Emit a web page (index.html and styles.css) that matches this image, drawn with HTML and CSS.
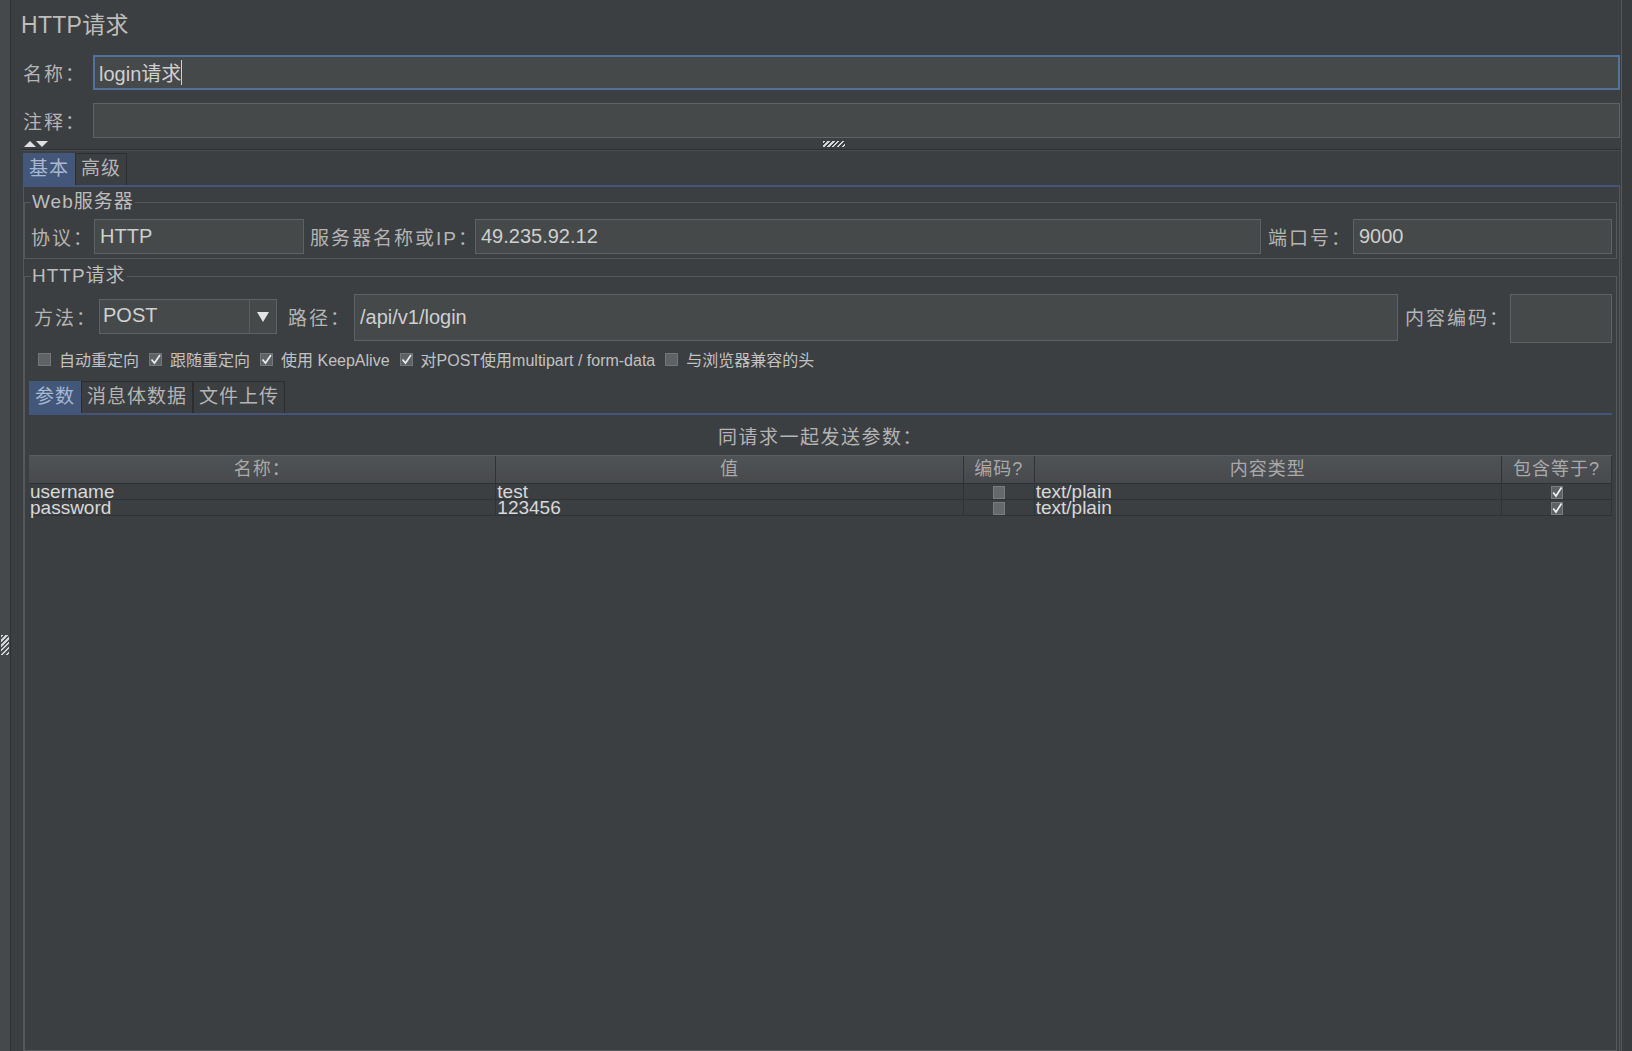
FILE: index.html
```html
<!DOCTYPE html>
<html lang="zh-CN">
<head>
<meta charset="utf-8">
<title>HTTP请求</title>
<link rel="stylesheet" href="styles.css">
</head>
<body>
<div class="app">
  <div class="split-strip"><div class="grip"></div></div>
  <div class="main">
    <div class="title">HTTP请求</div>
    <div class="field-row name-row">
      <span class="lbl">名称：</span>
      <div class="input focus">login请求<span class="caret"></span></div>
    </div>
    <div class="field-row comment-row">
      <span class="lbl">注释：</span>
      <div class="input"></div>
    </div>
    <div class="collapse-bar">
      <svg class="arrows" width="26" height="8" viewBox="0 0 26 8"><path d="M1 7 L7 1 L13 7 Z" fill="#e0e0e0"/><path d="M13 1 L25 1 L19 7 Z" fill="#e0e0e0"/></svg>
      <div class="hgrip"></div>
      <div></div>
    </div>
    <div class="tabs">
      <div class="tab active">基本</div>
      <div class="tab">高级</div>
    </div>
    <div class="tab-panel">
      <fieldset class="group web">
        <legend>Web服务器</legend>
        <div class="web-row">
          <span class="lbl w-proto">协议：</span>
          <div class="input w-proto-in">HTTP</div>
          <span class="lbl w-host">服务器名称或IP：</span>
          <div class="input w-host-in">49.235.92.12</div>
          <span class="lbl w-port">端口号：</span>
          <div class="input w-port-in">9000</div>
        </div>
      </fieldset>
      <fieldset class="group http">
        <legend>HTTP请求</legend>
        <div class="method-row">
          <span class="lbl m-lbl">方法：</span>
          <div class="combo">
            <div class="combo-text">POST</div>
            <div class="combo-btn"><svg width="12" height="10" viewBox="0 0 12 10"><path d="M0 0 L12 0 L6 10 Z" fill="#e4e4e4"/></svg></div>
          </div>
          <span class="lbl p-lbl">路径：</span>
          <div class="input path-in">/api/v1/login</div>
          <span class="lbl e-lbl">内容编码：</span>
          <div class="input enc-in"></div>
        </div>
        <div class="checks">
          <div class="cb"><svg class="box" viewBox="0 0 13 13"><rect x="0.5" y="0.5" width="12" height="12" fill="#5f6264" stroke="#74777a"/></svg><span>自动重定向</span></div>
          <div class="cb"><svg class="box" viewBox="0 0 13 13"><rect x="0.5" y="0.5" width="12" height="12" fill="#5f6264" stroke="#74777a"/><path d="M2.5 6.5 L5.5 10 L11 2" fill="none" stroke="#ececec" stroke-width="1.7"/></svg><span>跟随重定向</span></div>
          <div class="cb"><svg class="box" viewBox="0 0 13 13"><rect x="0.5" y="0.5" width="12" height="12" fill="#5f6264" stroke="#74777a"/><path d="M2.5 6.5 L5.5 10 L11 2" fill="none" stroke="#ececec" stroke-width="1.7"/></svg><span>使用 KeepAlive</span></div>
          <div class="cb"><svg class="box" viewBox="0 0 13 13"><rect x="0.5" y="0.5" width="12" height="12" fill="#5f6264" stroke="#74777a"/><path d="M2.5 6.5 L5.5 10 L11 2" fill="none" stroke="#ececec" stroke-width="1.7"/></svg><span>对POST使用multipart / form-data</span></div>
          <div class="cb"><svg class="box" viewBox="0 0 13 13"><rect x="0.5" y="0.5" width="12" height="12" fill="#5f6264" stroke="#74777a"/></svg><span>与浏览器兼容的头</span></div>
        </div>
        <div class="tabs inner-tabs">
          <div class="tab active">参数</div>
          <div class="tab">消息体数据</div>
          <div class="tab">文件上传</div>
        </div>
        <div class="inner-panel">
          <div class="caption">同请求一起发送参数：</div>
          <div class="grid head">
            <div class="hc">名称：</div>
            <div class="hc">值</div>
            <div class="hc">编码?</div>
            <div class="hc">内容类型</div>
            <div class="hc">包含等于?</div>
          </div>
          <div class="grid row">
            <div class="c">username</div>
            <div class="c">test</div>
            <div class="c mid"><svg class="tbox" viewBox="0 0 12 13"><rect x="0.5" y="0.5" width="11" height="12" fill="#66696b" stroke="#7a7d80"/></svg></div>
            <div class="c">text/plain</div>
            <div class="c mid"><svg class="tbox" viewBox="0 0 12 13"><rect x="0.5" y="0.5" width="11" height="12" fill="#5f6264" stroke="#7a7d80"/><path d="M2.2 6.5 L5 10 L10.5 1.5" fill="none" stroke="#f0f0f0" stroke-width="1.7"/></svg></div>
          </div>
          <div class="grid row">
            <div class="c">password</div>
            <div class="c">123456</div>
            <div class="c mid"><svg class="tbox" viewBox="0 0 12 13"><rect x="0.5" y="0.5" width="11" height="12" fill="#66696b" stroke="#7a7d80"/></svg></div>
            <div class="c">text/plain</div>
            <div class="c mid"><svg class="tbox" viewBox="0 0 12 13"><rect x="0.5" y="0.5" width="11" height="12" fill="#5f6264" stroke="#7a7d80"/><path d="M2.2 6.5 L5 10 L10.5 1.5" fill="none" stroke="#f0f0f0" stroke-width="1.7"/></svg></div>
          </div>
        </div>
      </fieldset>
    </div>
  </div>
  <div class="right-strip"></div>
</div>
</body>
</html>
```

FILE: styles.css
```css
* { box-sizing: border-box; }
html, body { margin: 0; height: 100%; overflow: hidden; }
body {
  background: #3c3f41;
  color: #bbbbbb;
  font-family: "Liberation Sans", "Noto Sans CJK SC", sans-serif;
}
.app { display: flex; height: 1051px; }

.split-strip {
  width: 11px;
  background: #46494b;
  border-right: 1px solid #2d2f31;
  padding-top: 635px;
}
.grip {
  width: 8px;
  height: 20px;
  margin-left: 1px;
  background: repeating-linear-gradient(135deg, #d4d4d4 0 1.5px, #4e5153 1.5px 3.5px);
}
.right-strip {
  width: 11px;
  background: #393b3d;
  border-left: 1px solid #55585a;
}

.main {
  flex: 1;
  min-width: 0;
  display: flex;
  flex-direction: column;
  padding-left: 10px;
}
.title {
  height: 48px;
  line-height: 50px;
  font-size: 23px;
  letter-spacing: 0.3px;
  color: #bdbdbd;
}

.lbl {
  font-size: 19px;
  letter-spacing: 2px;
  color: #b4b4b4;
  white-space: nowrap;
}
.input {
  height: 35px;
  background: #45494a;
  border: 1px solid #5f6264;
  font-size: 20px;
  color: #cfcfcf;
  padding-left: 5px;
  display: flex;
  align-items: center;
  white-space: nowrap;
}
.input.focus {
  border: 2px solid #52729a;
  padding-left: 4px;
}
.caret {
  display: inline-block;
  width: 1px;
  height: 25px;
  background: #d0d0d0;
}

.field-row {
  display: flex;
  align-items: center;
  height: 35px;
  padding-left: 2px;
  margin-right: 1px;
}
.field-row .lbl { width: 70px; }
.field-row .input { flex: 1; }
.name-row { margin-top: 7px; }
.comment-row { margin-top: 13px; }

.collapse-bar {
  height: 12px;
  display: grid;
  grid-template-columns: 1fr auto 1fr;
  align-items: center;
  border-bottom: 1px solid #2c2e30;
  box-shadow: 0 1px 0 #4a4d4f;
  padding-left: 2px;
}
.arrows { display: block; }
.hgrip {
  width: 22px;
  height: 6px;
  margin-left: 24px;
  background: repeating-linear-gradient(135deg, #d4d4d4 0 1.5px, #3c3f41 1.5px 3.5px);
}

.tabs {
  display: flex;
  height: 32px;
  margin-top: 3px;
  margin-left: 2px;
}
.tab {
  font-size: 19px;
  letter-spacing: 1px;
  line-height: 30px;
  padding: 0 5px;
  border: 1px solid #2b2d2f;
  border-bottom: none;
  background: #3c3f41;
  color: #b4b4b4;
  white-space: nowrap;
}
.tab.active {
  background: #42577a;
  color: #a7b8d2;
  border-color: #42577a;
}

.tab-panel {
  flex: 1;
  min-height: 0;
  display: flex;
  flex-direction: column;
  border-top: 2px solid #45547c;
  border-left: 1px solid #55585a;
  border-right: 1px solid #55585a;
  margin-left: 2px;
  margin-right: 1px;
  padding: 4px 2px 0 0;
}

.group {
  margin: 0;
  border: 1px solid #56595b;
  min-width: 0;
}
.group legend {
  padding: 0 1px;
  font-size: 19px;
  line-height: 22px;
  letter-spacing: 1px;
  color: #bdbdbd;
}
.web { padding: 6px 4px 4px 6px; }
.web-row {
  display: flex;
  align-items: center;
  height: 35px;
}
.w-proto { width: 63px; }
.w-proto-in { width: 210px; }
.w-host { width: 165px; margin-left: 6px; }
.w-host-in { flex: 1; }
.w-port { width: 85px; margin-left: 7px; }
.w-port-in { width: 259px; }

.http {
  flex: 1;
  min-height: 0;
  display: flex;
  flex-direction: column;
  margin-top: 6px;
  padding: 7px 4px 0 4px;
}
.http legend { margin-left: 2px; }

.method-row {
  display: flex;
  align-items: center;
  height: 49px;
  padding-left: 5px;
}
.method-row .lbl { margin-bottom: 5px; }
.m-lbl { width: 65px; }
.combo {
  width: 178px;
  height: 35px;
  align-self: flex-start;
  margin-top: 5px;
  display: flex;
  background: #45494a;
  border: 1px solid #5f6264;
}
.combo-text {
  flex: 1;
  font-size: 20px;
  color: #d0d0d0;
  padding-left: 3px;
  line-height: 31px;
}
.combo-btn {
  width: 27px;
  border-left: 1px solid #5a5d5f;
  display: flex;
  align-items: center;
  justify-content: center;
}
.p-lbl { width: 66px; margin-left: 11px; }
.path-in { flex: 1; height: 47px; align-self: flex-start; }
.e-lbl { width: 105px; margin-left: 7px; }
.enc-in { width: 102px; height: 49px; }

.checks {
  display: flex;
  align-items: center;
  height: 22px;
  margin-top: 5px;
  padding-left: 9px;
  font-size: 16px;
  color: #c2c2c2;
}
.cb {
  display: flex;
  align-items: center;
  margin-right: 10px;
  white-space: nowrap;
}
.box {
  display: block;
  flex-shrink: 0;
  width: 13px;
  height: 13px;
  margin-right: 8px;
}

.inner-tabs {
  margin-top: 11px;
  margin-left: 0;
}
.inner-panel {
  flex: 1;
  border-top: 2px solid #45547c;
}
.caption {
  height: 40px;
  display: flex;
  align-items: center;
  justify-content: center;
  font-size: 19px;
  letter-spacing: 1.5px;
  color: #b4b4b4;
}

.grid {
  display: grid;
  grid-template-columns: 1fr 1fr 71px 1fr 110px;
}
.head {
  height: 29px;
  background: linear-gradient(#505355, #47494c);
  border-top: 1px solid #5a5d5f;
  border-bottom: 1px solid #2e3032;
}
.hc {
  border-right: 1px solid #303234;
  text-align: center;
  font-size: 18px;
  letter-spacing: 1px;
  line-height: 27px;
  color: #a9a9a9;
  white-space: nowrap;
}
.row {
  height: 16px;
  border-bottom: 1px solid #303234;
}
.c {
  border-right: 1px solid #303234;
  font-size: 19px;
  line-height: 16px;
  color: #d8d8d8;
  white-space: nowrap;
  padding-left: 1px;
}
.c.mid {
  display: flex;
  align-items: center;
  justify-content: center;
}
.tbox {
  display: block;
  flex-shrink: 0;
  width: 12px;
  height: 13px;
}
```
